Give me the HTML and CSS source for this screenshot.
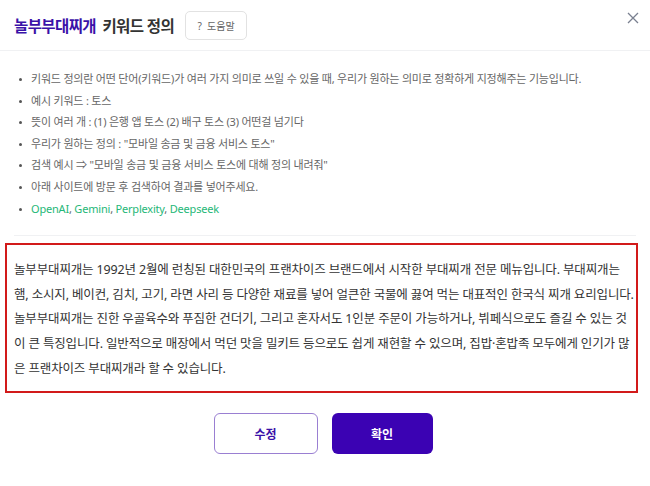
FILE: index.html
```html
<!DOCTYPE html>
<html lang="ko">
<head>
    <meta charset="UTF-8">
    <meta name="viewport" content="width=device-width, initial-scale=1.0">
    <title>키워드 정의</title>
    <link rel="stylesheet" href="styles.css">
</head>
<body>

<div class="modal">
    <header class="modal-header">
        <h2 class="modal-title"><span class="brand">놀부부대찌개</span> 키워드 정의</h2>
        <button class="help-button">?&nbsp; 도움말</button>
        <button class="close-button" aria-label="닫기">
            <svg width="12" height="12" viewBox="0 0 12 12"><path d="M1 1 L11 11 M11 1 L1 11" stroke="#7a8090" stroke-width="1.3" fill="none"/></svg>
        </button>
    </header>

    <ul class="guide-list">
        <li>키워드 정의란 어떤 단어(키워드)가 여러 가지 의미로 쓰일 수 있을 때, 우리가 원하는 의미로 정확하게 지정해주는 기능입니다.</li>
        <li>예시 키워드 : 토스</li>
        <li>뜻이 여러 개 : (1) 은행 앱 토스 (2) 배구 토스 (3) 어떤걸 넘기다</li>
        <li>우리가 원하는 정의 : "모바일 송금 및 금융 서비스 토스"</li>
        <li>검색 예시 ⇒ "모바일 송금 및 금융 서비스 토스에 대해 정의 내려줘"</li>
        <li>아래 사이트에 방문 후 검색하여 결과를 넣어주세요.</li>
        <li><a class="site-link">OpenAI</a>, <a class="site-link">Gemini</a>, <a class="site-link">Perplexity</a>, <a class="site-link">Deepseek</a></li>
    </ul>

    <div class="definition-box">
        <p>놀부부대찌개는 1992년 2월에 런칭된 대한민국의 프랜차이즈 브랜드에서 시작한 부대찌개 전문 메뉴입니다. 부대찌개는<br>햄, 소시지, 베이컨, 김치, 고기, 라면 사리 등 다양한 재료를 넣어 얼큰한 국물에 끓여 먹는 대표적인 한국식 찌개 요리입니다.<br>놀부부대찌개는 진한 우골육수와 푸짐한 건더기, 그리고 혼자서도 1인분 주문이 가능하거나, 뷔페식으로도 즐길 수 있는 것<br>이 큰 특징입니다. 일반적으로 매장에서 먹던 맛을 밀키트 등으로도 쉽게 재현할 수 있으며, 집밥·혼밥족 모두에게 인기가 많<br>은 프랜차이즈 부대찌개라 할 수 있습니다.</p>
    </div>

    <div class="actions">
        <button class="btn btn-outline">수정</button>
        <button class="btn btn-primary">확인</button>
    </div>
</div>

</body>
</html>
```

FILE: styles.css
```css
body {
    font-family: "Noto Sans", "Noto Sans CJK KR", sans-serif;
    background-color: #fff;
    margin: 0;
    padding: 0;
}
.modal {
    width: 650px;
    height: 486px;
    background-color: #fff;
}
.modal-header {
    display: flex;
    align-items: center;
    height: 50px;
    padding: 0 14px;
    border-bottom: 1px solid #f0f1f3;
}
.modal-title {
    margin: 0;
    font-size: 15.5px;
    font-weight: bold;
    color: #333;
    letter-spacing: -0.6px;
}
.brand {
    color: #3a12a8;
    margin-right: 3px;
}
.help-button {
    margin-left: 11px;
    width: 62px;
    height: 29px;
    border: 1px solid #e2e2e2;
    border-radius: 5px;
    background-color: #fff;
    color: #666;
    font-family: inherit;
    font-size: 10px;
    padding: 0;
}
.close-button {
    margin-left: auto;
    margin-top: -14px;
    margin-right: -4px;
    border: none;
    background: none;
    padding: 0;
    width: 14px;
    height: 14px;
    display: flex;
    align-items: center;
    justify-content: center;
}
.guide-list {
    list-style-type: none;
    margin: 0 14px;
    padding: 17px 0 16px 0;
    border-bottom: 1px solid #f0f1f3;
}
.guide-list li {
    position: relative;
    padding-left: 17px;
    font-size: 11px;
    line-height: 21.6px;
    color: #666;
    letter-spacing: -0.2px;
}
.guide-list li::before {
    content: "";
    position: absolute;
    left: 5px;
    top: 10px;
    width: 3px;
    height: 3px;
    border-radius: 50%;
    background-color: #555;
}
.site-link {
    color: #25b777;
    text-decoration: none;
}
.definition-box {
    margin: 7px 12px 0 5px;
    height: 146px;
    border: 2px solid #d21a1a;
    padding: 0 7px;
}
.definition-box p {
    margin: 0;
    padding-top: 13px;
    font-size: 12.5px;
    line-height: 24.6px;
    color: #333;
    white-space: nowrap;
    letter-spacing: -0.15px;
}
.actions {
    display: flex;
    justify-content: center;
    gap: 14px;
    margin-top: 20px;
    padding-right: 4px;
}
.btn {
    width: 104px;
    height: 41px;
    border-radius: 6px;
    font-family: inherit;
    font-size: 12px;
    font-weight: bold;
    cursor: pointer;
}
.btn-outline {
    background-color: #fff;
    color: #3a12a8;
    border: 1px solid #9a7fd2;
}
.btn-primary {
    width: 101px;
    background-color: #3b02b3;
    color: #fff;
    border: none;
}
```
